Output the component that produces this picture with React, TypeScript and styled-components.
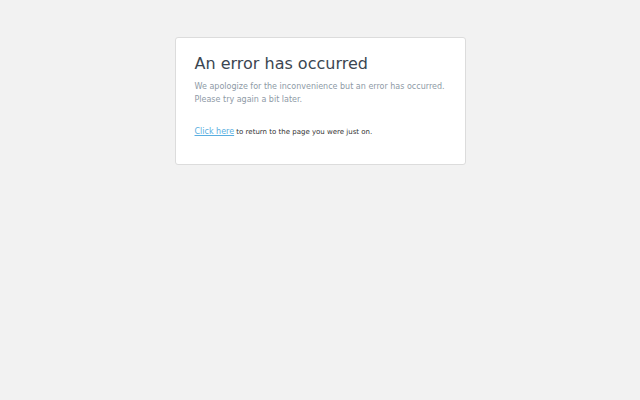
import React from 'react'
import styled, { createGlobalStyle } from 'styled-components'

const GlobalStyle = createGlobalStyle`
  html, body {
    margin: 0;
    padding: 0;
    background-color: #f2f2f2;
    font-family: "DejaVu Sans", sans-serif;
  }
`

const Page = styled.div`
  min-height: 400px;
  display: flex;
  justify-content: center;
  align-items: flex-start;
  padding-top: 37px;
  box-sizing: border-box;
`

const Card = styled.div`
  width: 291px;
  box-sizing: border-box;
  padding: 14px 16px 26px 19px;
  background-color: #fff;
  border: 1px solid #dcdcdc;
  border-radius: 3px;
`

const Title = styled.h1`
  margin: 0 0 4px;
  font-size: 16px;
  font-weight: normal;
  line-height: 24px;
  color: #3b4651;
`

const Message = styled.p`
  margin: 0 0 20px;
  font-size: 8px;
  line-height: 13px;
  color: #8e9aa6;
`

const Footer = styled.p`
  margin: 0;
  font-size: 7px;
  line-height: 12px;
  color: #333;

  & a {
    font-size: 8px;
    color: #5aaee0;
    text-decoration: underline;
  }
`

const App: React.FC = () => (
  <>
    <GlobalStyle />
    <Page>
      <Card>
        <Title>An error has occurred</Title>
        <Message>
          We apologize for the inconvenience but an error has occurred.
          Please try again a bit later.
        </Message>
        <Footer>
          <a href="#">Click here</a> to return to the page you were just on.
        </Footer>
      </Card>
    </Page>
  </>
)

export default App
